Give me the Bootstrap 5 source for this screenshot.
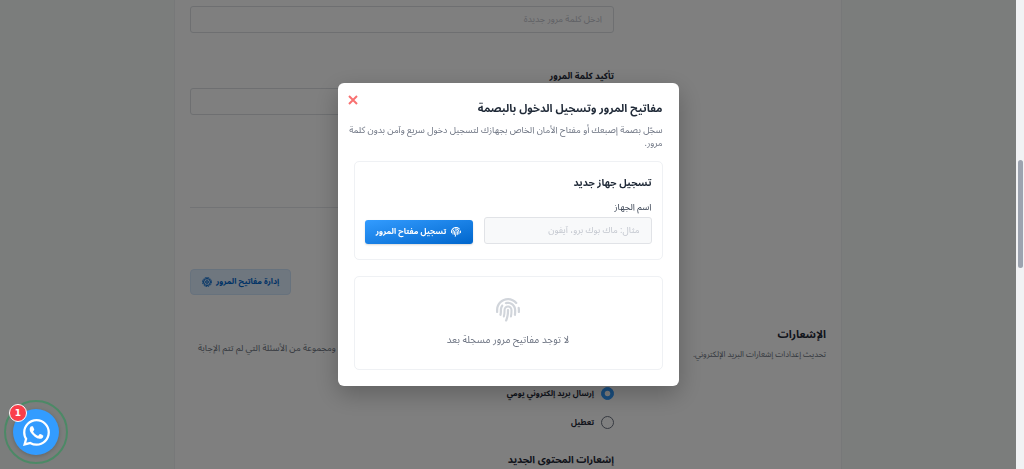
<!DOCTYPE html>
<html lang="ar">
<head>
<meta charset="utf-8">
<meta name="viewport" content="width=device-width, initial-scale=1">
<title>إعدادات الحساب</title>
<link href="https://cdn.jsdelivr.net/npm/bootstrap@5.3.0/dist/css/bootstrap.min.css" rel="stylesheet">
<style>
  :root { --ink: #1f2937; --muted: #6b7280; --line: #e1e3e7; --brand: #339cff; --rail: 8px; }
  html, body { height: 100%; }
  body { font-family: "Noto Sans Arabic", "DejaVu Sans", sans-serif; font-size: 9px; line-height: 13px; color: var(--ink); background: #f7faf8; overflow: hidden; }
  .page-view { height: 100vh; margin-right: var(--rail); overflow: hidden; }
  .settings-card { max-width: 668px; min-height: 100vh; border: solid #eff0f2; border-width: 0 1px; padding: 6px 15px 0; }
  .field { height: 27px; border: 1px solid var(--line); border-radius: 3px; font-size: 9px; padding: 0 11px; box-shadow: none; }
  .page-view .field { border-color: #dcdfe3; }
  .field::placeholder { color: #c3c7cf; opacity: 1; }
  .page-view .field::placeholder { color: #bec2ca; }
  .field-label { font-size: 9px; line-height: 14px; font-weight: 700; }
  .next-field { margin-top: 37px; }
  .rule { border-top: 1px solid #e5e7eb; margin-top: 92px; }
  .manage-btn { margin-top: 61px; height: 26px; border: 1px solid #cfe4fa; border-radius: 4px; background: #dfeeff; color: #0066cc; font-size: 8px; font-weight: 700; padding: 0 11px; }
  .notify { margin-top: 31px; }
  .section-title { font-size: 11px; line-height: 18px; font-weight: 700; }
  .section-copy { font-size: 8px; color: var(--muted); }
  .notify-copy { margin-top: 16px; color: var(--muted); white-space: nowrap; padding-left: 8px; }
  .notify-radio { gap: 7px; font-size: 8px; line-height: 13px; font-weight: 700; }
  .notify-radio .form-check-input { width: 13px; height: 13px; border-color: #6b7280; }
  .notify-radio .form-check-input:checked { background-color: var(--brand); border-color: var(--brand); }
  .sub-title { font-size: 10px; line-height: 14px; font-weight: 700; }
  .scroll-rail { position: fixed; top: 0; right: 0; width: var(--rail); height: 100%; background: #f1f2f4; z-index: 1080; padding: 160px 1px 0 2px; }
  .scroll-thumb { height: 108px; border-radius: 3px; background: #9ca3af; }
  .keys-modal { width: calc(100% - var(--rail)); overflow: hidden; }
  .keys-modal .modal-dialog { max-width: 341px; margin-top: 0; margin-bottom: 0; min-height: 100%; }
  .keys-modal .modal-content { border: 0; border-radius: 6px; padding: 17px 16px 16px; box-shadow: 0 8px 24px rgba(0,0,0,.25); }
  .close-x { position: absolute; top: 9px; left: 7px; width: 16px; height: 16px; color: #f87171; }
  .modal-head { font-size: 11px; line-height: 18px; font-weight: 700; }
  .modal-copy { font-size: 9px; line-height: 13px; color: var(--muted); margin: 6px 0 11px -12px; }
  .panel { border: 1px solid #eff1f4; border-radius: 5px; padding: 12px 10px 15px; }
  .panel-title { font-size: 10px; line-height: 18px; font-weight: 700; }
  .device-row { gap: 11px; margin-top: 9px; }
  .device-label { font-size: 9px; line-height: 14px; color: #374151; margin-bottom: 2px; }
  .register-btn { width: 108px; height: 24px; border: 0; border-radius: 3px; color: #fff; font-size: 8px; font-weight: 700; background: linear-gradient(to bottom right, #339cff, #0066cc); box-shadow: 0 1px 2px rgba(0,0,0,.15); padding: 0; gap: 5px; white-space: nowrap; }
  .empty-panel { margin-top: 16px; padding: 21px 10px; color: var(--muted); font-size: 10px; line-height: 16px; }
  .empty-icon { margin-bottom: 10px; color: #d1d5db; }
  .chat-btn { position: fixed; left: 4px; bottom: 5px; width: 64px; height: 64px; border: 2px solid rgba(50,145,90,.65); border-radius: 50%; background: none; z-index: 1090; padding: 0; }
  .chat-face { width: 46px; height: 46px; border-radius: 50%; background: var(--brand); color: #fff; box-shadow: 0 1px 4px rgba(0,0,0,.2); }
  .chat-count { position: absolute; left: 3px; top: 2px; width: 18px; height: 18px; border: 1px solid #fff; border-radius: 50%; background: #fa3e4a; color: #fff; font: 700 9px/16px "DejaVu Sans", sans-serif; }
</style>
</head>
<body>
<svg class="d-none" aria-hidden="true">
  <symbol id="fingerprint" viewBox="0 0 512 512"><path fill="currentColor" d="M48 256C48 141.1 141.1 48 256 48c63.1 0 119.6 28.1 157.8 72.5c8.6 10.1 23.8 11.2 33.8 2.6s11.2-23.8 2.6-33.8C403.3 34.6 333.7 0 256 0C114.6 0 0 114.6 0 256v40c0 13.3 10.7 24 24 24s24-10.7 24-24V256zm458.5-52.9c-2.7-13-15.5-21.3-28.4-18.5s-21.3 15.5-18.5 28.4c2.9 13.9 4.5 28.3 4.5 43.1v40c0 13.3 10.7 24 24 24s24-10.7 24-24V256c0-18.1-1.9-35.8-5.5-52.9zM256 80c-19 0-37.4 3-54.5 8.6c-15.2 5-18.7 23.7-8.3 35.9c7.1 8.3 18.8 10.8 29.4 7.9c10.6-2.9 21.8-4.4 33.4-4.4c70.7 0 128 57.3 128 128v24.9c0 25.2-1.5 50.3-4.4 75.3c-1.7 14.6 9.4 27.8 24.2 27.8c11.8 0 21.9-8.6 23.3-20.3c3.3-27.4 5-55 5-82.7V256c0-97.2-78.8-176-176-176zM150.7 148.7c-9.1-10.6-25.3-11.4-33.9-.4C93.7 178 80 215.4 80 256v24.9c0 24.2-2.6 48.4-7.8 71.9C68.8 368.4 80.1 384 96.1 384c10.5 0 19.9-7 22.2-17.3c6.4-28.1 9.7-56.8 9.7-85.8V256c0-27.2 8.5-52.4 22.9-73.1c7.2-10.4 8-24.6-.2-34.2zM256 160c-53 0-96 43-96 96v24.9c0 35.9-4.6 71.5-13.8 106.1c-3.8 14.3 6.7 29 21.5 29c9.5 0 17.9-6.2 20.4-15.4c10.5-39 15.9-79.2 15.9-119.7V256c0-28.7 23.3-52 52-52s52 23.3 52 52v24.9c0 36.3-3.5 72.4-10.4 107.9c-2.7 13.9 7.7 27.2 21.8 27.2c10.2 0 19-7 21-17c7.7-38.8 11.6-78.3 11.6-118.1V256c0-53-43-96-96-96zm24 96c0-13.3-10.7-24-24-24s-24 10.7-24 24v24.9c0 59.9-11 119.3-32.5 175.2l-5.9 15.3c-4.8 12.4 1.4 26.3 13.8 31s26.3-1.4 31-13.8l5.9-15.3C267.9 411.9 280 346.7 280 280.9V256z"/></symbol>
</svg>

<main class="page-view" dir="rtl">
  <div class="settings-card bg-white mx-auto">
    <form class="row gx-0">
      <div class="col-4"></div>
      <div class="col-8">
        <input type="password" class="form-control field" placeholder="ادخل كلمة مرور جديدة" aria-label="كلمة المرور الجديدة">
        <label class="field-label d-block next-field" for="confirm">تأكيد كلمة المرور</label>
        <input type="password" id="confirm" class="form-control field mt-1">
        <div class="rule"></div>
        <div class="d-flex justify-content-end">
          <button type="button" class="btn manage-btn d-flex align-items-center gap-1">إدارة مفاتيح المرور
            <svg width="10" height="10" viewBox="0 0 20 20" fill="none" stroke="currentColor" aria-hidden="true"><circle cx="10" cy="10" r="7" stroke-width="2"/><circle cx="10" cy="10" r="9" stroke-width="2" stroke-dasharray="2.8 1.9"/><circle cx="10" cy="10" r="2.5" stroke-width="2"/><path d="M10 3v5M10 12v5M4 7l4 2M12 11l4 2M4 13l4-2M12 9l4-2" stroke-width="1"/></svg>
          </button>
        </div>
      </div>
    </form>
    <form class="row gx-0 notify">
      <div class="col-4">
        <h2 class="section-title mb-0">الإشعارات</h2>
        <p class="mb-0 mt-1 section-copy text-nowrap">تحديث إعدادات إشعارات البريد الإلكتروني.</p>
      </div>
      <div class="col-8">
        <div class="d-flex justify-content-end"><p class="notify-copy mb-0">ومجموعة من الأسئلة التي لم تتم الإجابة</p></div>
        <div class="d-flex align-items-center notify-radio mt-4 pt-2"><input class="form-check-input m-0" type="radio" name="daily" id="daily-on" checked><label for="daily-on">إرسال بريد إلكتروني يومي</label></div>
        <div class="d-flex align-items-center notify-radio mt-3"><input class="form-check-input m-0" type="radio" name="daily" id="daily-off"><label for="daily-off">تعطيل</label></div>
        <h3 class="sub-title mt-4 mb-0">إشعارات المحتوى الجديد</h3>
      </div>
    </form>
  </div>
</main>

<div class="modal-backdrop show"></div>
<div class="modal d-block keys-modal" dir="rtl" role="dialog" aria-labelledby="keys-title">
  <div class="modal-dialog modal-dialog-centered">
    <div class="modal-content">
      <button type="button" class="btn close-x p-0 border-0 d-flex align-items-center justify-content-center" aria-label="إغلاق">
        <svg width="10" height="10" viewBox="0 0 10 10" stroke="currentColor" stroke-width="2" aria-hidden="true"><path d="M1 1l8 8M9 1L1 9"/></svg>
      </button>
      <h1 class="modal-head mb-0" id="keys-title">مفاتيح المرور وتسجيل الدخول بالبصمة</h1>
      <p class="modal-copy">سجّل بصمة إصبعك أو مفتاح الأمان الخاص بجهازك لتسجيل دخول سريع وآمن بدون كلمة مرور.</p>
      <section class="panel">
        <h2 class="panel-title mb-0">تسجيل جهاز جديد</h2>
        <form class="d-flex align-items-end device-row">
          <div class="flex-grow-1">
            <label class="d-block device-label" for="device">اسم الجهاز</label>
            <input type="text" id="device" class="form-control field bg-light" placeholder="مثال: ماك بوك برو، آيفون">
          </div>
          <button type="button" class="btn register-btn flex-shrink-0 d-flex align-items-center justify-content-center">
            <svg width="10" height="10" aria-hidden="true"><use href="#fingerprint"/></svg>تسجيل مفتاح المرور
          </button>
        </form>
      </section>
      <section class="panel empty-panel text-center">
        <svg class="d-block mx-auto empty-icon" width="24" height="24" aria-hidden="true"><use href="#fingerprint"/></svg>
        <p class="mb-0">لا توجد مفاتيح مرور مسجلة بعد</p>
      </section>
    </div>
  </div>
</div>

<button type="button" class="chat-btn d-flex align-items-center justify-content-center" aria-label="واتساب">
  <span class="chat-face d-flex align-items-center justify-content-center">
    <svg width="27" height="27" viewBox="0 0 16 16" fill="currentColor" aria-hidden="true"><path d="M13.601 2.326A7.854 7.854 0 0 0 7.994 0C3.627 0 .068 3.558.064 7.926c0 1.399.366 2.76 1.057 3.965L0 16l4.204-1.102a7.933 7.933 0 0 0 3.79.965h.004c4.368 0 7.926-3.558 7.93-7.93A7.898 7.898 0 0 0 13.6 2.326zM7.994 14.521a6.573 6.573 0 0 1-3.356-.92l-.24-.144-2.494.654.666-2.433-.156-.251a6.56 6.56 0 0 1-1.007-3.505c0-3.626 2.957-6.584 6.591-6.584a6.56 6.56 0 0 1 4.66 1.931 6.557 6.557 0 0 1 1.928 4.66c-.004 3.639-2.961 6.592-6.592 6.592zm3.615-4.934c-.197-.099-1.17-.578-1.353-.646-.182-.065-.315-.099-.445.099-.133.197-.513.646-.627.775-.114.133-.232.148-.43.05-.197-.1-.836-.308-1.592-.985-.59-.525-.985-1.175-1.103-1.372-.114-.198-.011-.304.088-.403.087-.088.197-.232.296-.346.1-.114.133-.198.198-.33.065-.134.034-.248-.015-.347-.05-.099-.445-1.076-.612-1.47-.16-.389-.323-.335-.445-.34-.114-.007-.247-.007-.38-.007a.729.729 0 0 0-.529.247c-.182.198-.691.677-.691 1.654 0 .977.71 1.916.81 2.049.098.133 1.394 2.132 3.383 2.992.47.205.84.326 1.129.418.475.152.904.129 1.246.08.38-.058 1.171-.48 1.338-.943.164-.464.164-.86.114-.943-.049-.084-.182-.133-.38-.232z"/></svg>
  </span>
  <span class="chat-count">1</span>
</button>

<div class="scroll-rail" aria-hidden="true"><div class="scroll-thumb"></div></div>
<script src="https://cdn.jsdelivr.net/npm/bootstrap@5.3.0/dist/js/bootstrap.bundle.min.js"></script>
</body>
</html>
